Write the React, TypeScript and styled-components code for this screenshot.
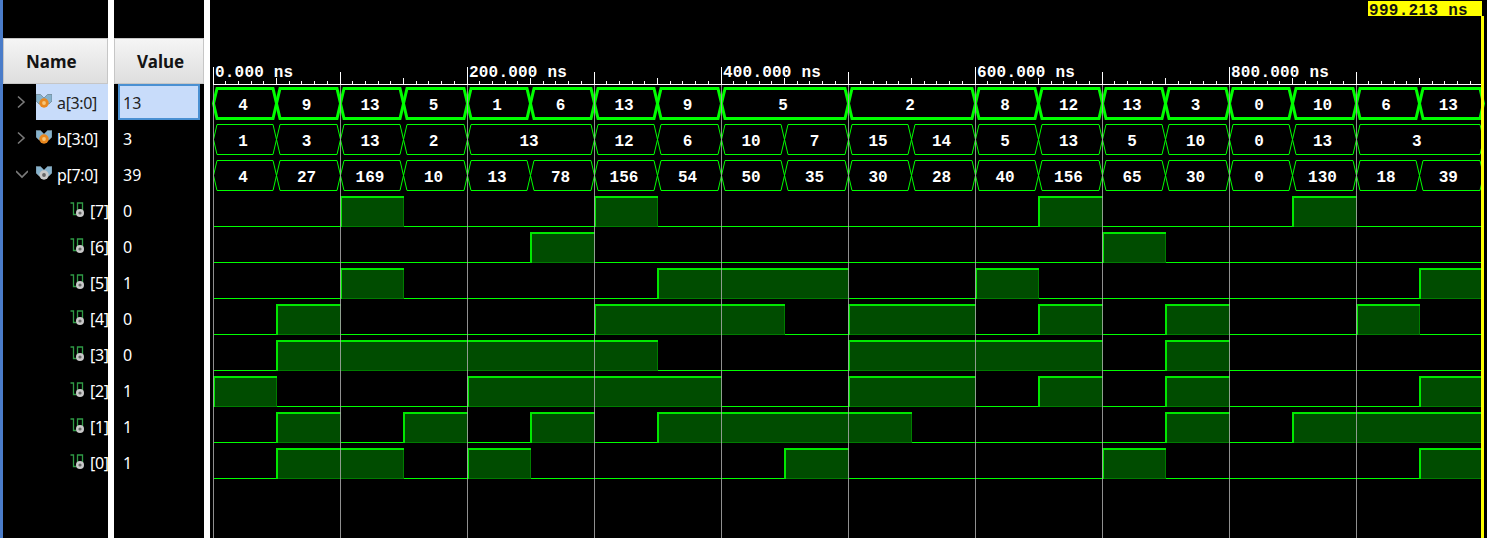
import React from "react";
import styled, { createGlobalStyle } from "styled-components";

const Global = createGlobalStyle`
  html, body { margin: 0; padding: 0; background: #fff; overflow: hidden; }
  #root { height: 538px; }
`;

const A: [string, number][] = [["4",1],["9",1],["13",1],["5",1],["1",1],["6",1],["13",1],["9",1],["5",2],["2",2],["8",1],["12",1],["13",1],["3",1],["0",1],["10",1],["6",1],["13",1]];
const B: [string, number][] = [["1",1],["3",1],["13",1],["2",1],["13",2],["12",1],["6",1],["10",1],["7",1],["15",1],["14",1],["5",1],["13",1],["5",1],["10",1],["0",1],["13",1],["3",2]];
const P = [4,27,169,10,13,78,156,54,50,35,30,28,40,156,65,30,0,130,18,39];
const BITS = [7,6,5,4,3,2,1,0];

const px = (i: number) => Math.floor(213 + 63.5 * i) + 0.5;
const END = 1481;

const Page = styled.div`
  display: flex;
  height: 538px;
  width: 1487px;
  background: #fff;
`;
const Strip = styled.div`
  width: 3px;
  background: #4a7cc9;
`;
const Column = styled.div<{ $w: number; $gap: number }>`
  width: ${(p) => p.$w}px;
  margin-right: ${(p) => p.$gap}px;
  background: #000;
  padding-top: 38px;
  box-sizing: border-box;
  overflow: hidden;
`;
const Header = styled.div<{ $pad: number }>`
  height: 46px;
  box-sizing: border-box;
  display: flex;
  align-items: center;
  padding-left: ${(p) => p.$pad}px;
  border: 1px solid #c6c6c6;
  background: linear-gradient(#f5f5f5, #dedede);
  color: #141414;
  font: bold 17px "Noto Sans", "Open Sans", sans-serif;
`;
const NameRow = styled.div<{ $indent: number }>`
  height: 36px;
  display: flex;
  align-items: center;
  padding-left: ${(p) => p.$indent}px;
  white-space: nowrap;
`;
const Chevron = styled.svg<{ $gap: number }>`
  width: 12px;
  height: 14px;
  margin-right: ${(p) => p.$gap}px;
  flex: none;
`;
const NameCell = styled.div<{ $selected?: boolean }>`
  flex: 1;
  height: 36px;
  display: flex;
  align-items: center;
  background: ${(p) => (p.$selected ? "#c8dcfa" : "transparent")};
`;
const BusGlyph = styled.svg`
  flex: none;
  margin-right: 5px;
  margin-top: -1px;
`;
const BitGlyph = styled.svg`
  flex: none;
  margin-right: 5px;
  margin-top: -2px;
`;
const Label = styled.span<{ $selected?: boolean }>`
  font: 16px "Noto Sans", "Open Sans", sans-serif;
  letter-spacing: -0.35px;
  color: ${(p) => (p.$selected ? "#222" : "#fff")};
  padding-top: 2px;
`;
const ValueRow = styled.div<{ $selected?: boolean }>`
  height: 36px;
  margin: 0 4px;
  box-sizing: border-box;
  display: flex;
  align-items: center;
  padding-left: ${(p) => (p.$selected ? 3 : 5)}px;
  padding-top: 2px;
  font: 16px "Noto Sans", "Open Sans", sans-serif;
  color: ${(p) => (p.$selected ? "#222" : "#fff")};
  background: ${(p) => (p.$selected ? "#c8dcfa" : "transparent")};
  border: ${(p) => (p.$selected ? "2px solid #4a90d2" : "0")};
`;
const WavePanel = styled.div`
  flex: 1;
  background: #000;
  height: 538px;
`;
const WaveSvg = styled.svg`
  display: block;
`;
const MonoText = styled.text<{ $fill: string; $spacing?: number }>`
  font: bold 16px "Liberation Mono", monospace;
  letter-spacing: ${(p) => p.$spacing ?? 0}px;
  fill: ${(p) => p.$fill};
`;

const Right = () => (
  <Chevron $gap={9} viewBox="0 0 12 14">
    <path d="M3 1.5 L9 7 L3 12.5" fill="none" stroke="#7a7a7a" strokeWidth="1.6" />
  </Chevron>
);
const Down = () => (
  <Chevron $gap={8} viewBox="0 0 12 14">
    <path d="M0 4 L6 10 L12 4" fill="none" stroke="#7a7a7a" strokeWidth="1.6" />
  </Chevron>
);

const BusIcon = ({ color, center }: { color: string; center: string }) => (
  <BusGlyph width="16" height="15" viewBox="0 0 16 15">
    <path d="M0 0.5 L4.5 0.5 L8 4 L11.5 0.5 L16 0.5 L16 7 L13 10 L3 10 L0 7 Z" fill="#86b2cc" stroke="#6a7f8c" strokeWidth="0.7" />
    <circle cx="8" cy="9" r="4.7" fill={color} />
    <circle cx="8" cy="9" r="1.9" fill={center} />
  </BusGlyph>
);

const BitIcon = () => (
  <BitGlyph width="15" height="15" viewBox="0 0 15 15">
    <path d="M0.5 1 H3.5 V12.5 H6.5 M7.5 9 V1 H12.5 V9" fill="none" stroke="#2f9a45" strokeWidth="1.3" />
    <circle cx="10" cy="11" r="4" fill="#c9c9c9" />
    <circle cx="10" cy="11" r="1.6" fill="#666" />
  </BitGlyph>
);

function hexPath(x0: number, x1: number, top: number, bottom: number) {
  const mid = (top + bottom) / 2;
  const k = 3.5;
  return `M${x0} ${mid} L${x0 + k} ${top} H${x1 - k} L${x1} ${mid} L${x1 - k} ${bottom} H${x0 + k} Z`;
}

const Bus = ({ segs, bottom, bold }: { segs: [string, number][]; bottom: number; bold?: boolean }) => {
  let i = 0;
  return (
    <g>
      {segs.map(([t, n], k) => {
        const x0 = px(i);
        const x1 = px(i + n);
        i += n;
        const cx = Math.min((x0 + x1) / 2, (x0 + 1481) / 2) - 2;
        return (
          <g key={k}>
            <path d={hexPath(x0, x1, bottom - 30, bottom)} fill="none" stroke="#00ff00" strokeWidth={bold ? 3 : 1} />
            <MonoText $fill="#fff" x={cx} y={bottom - 9} textAnchor="middle">{t}</MonoText>
          </g>
        );
      })}
    </g>
  );
};

const BitWave = ({ bit, bottom }: { bit: number; bottom: number }) => {
  const top = bottom - 30;
  const parts: React.ReactNode[] = [];
  let i = 0;
  while (i < 20) {
    const v = (P[i] >> bit) & 1;
    let j = i;
    while (j < 20 && ((P[j] >> bit) & 1) === v) j++;
    const x0 = px(i);
    const x1 = Math.min(px(j), END);
    if (v) {
      parts.push(
        <g key={i}>
          <rect x={x0} y={top} width={x1 - x0} height={30} fill="#004c00" stroke="#007c00" />
          <path d={`M${x0 + 0.5} ${bottom} V${top + 0.5} H${x1}`} fill="none" stroke="#00e800" strokeWidth="2" />
        </g>
      );
    } else {
      parts.push(<path key={i} d={`M${x0} ${bottom} H${x1}`} stroke="#00ff00" fill="none" />);
    }
    i = j;
  }
  return <g shapeRendering="crispEdges">{parts}</g>;
};

const Ruler = () => {
  const minor: React.ReactNode[] = [];
  for (let i = 0; i <= 100; i++) {
    const x = Math.floor(213 + 12.7 * i) + 0.5;
    if (x > 1481) break;
    if (i % 10 === 0) continue;
    minor.push(<path key={i} d={`M${x} ${i % 5 === 0 ? 78 : 81} V84`} stroke="#fff" />);
  }
  const grid: React.ReactNode[] = [];
  for (let i = 0; i <= 9; i++) {
    const x = px(i * 2);
    grid.push(<path key={i} d={`M${x} ${i % 2 === 0 ? 67 : 72} V84`} stroke="#fff" />);
  }
  return (
    <g shapeRendering="crispEdges">
      <path d="M213 84.5 H1481" stroke="#fff" />
      {minor}
      {grid}
    </g>
  );
};

const Grid = () => (
  <g shapeRendering="crispEdges">
    {Array.from({ length: 10 }, (_, i) => (
      <path key={i} d={`M${px(i * 2)} 85 V538`} stroke="#a8a8a8" strokeOpacity="0.85" />
    ))}
  </g>
);

export default function App() {
  return (
    <>
      <Global />
      <Page>
        <Strip />
        <Column $w={105} $gap={6}>
          <Header $pad={22}>Name</Header>
          <NameRow $indent={12}>
            <Right />
            <NameCell $selected>
              <BusIcon color="#e8871e" center="#f6c67a" />
              <Label $selected>a[3:0]</Label>
            </NameCell>
          </NameRow>
          <NameRow $indent={12}>
            <Right />
            <NameCell>
              <BusIcon color="#e8871e" center="#f6c67a" />
              <Label>b[3:0]</Label>
            </NameCell>
          </NameRow>
          <NameRow $indent={13}>
            <Down />
            <NameCell>
              <BusIcon color="#c9c9c9" center="#666" />
              <Label>p[7:0]</Label>
            </NameCell>
          </NameRow>
          {BITS.map((b) => (
            <NameRow key={b} $indent={67}>
              <BitIcon />
              <Label>[{b}]</Label>
            </NameRow>
          ))}
        </Column>
        <Column $w={90} $gap={6}>
          <Header $pad={22}>Value</Header>
          <ValueRow $selected>13</ValueRow>
          <ValueRow>3</ValueRow>
          <ValueRow>39</ValueRow>
          {BITS.map((b) => (
            <ValueRow key={b}>{(39 >> b) & 1}</ValueRow>
          ))}
        </Column>
        <WavePanel>
          <WaveSvg width="1277" height="538" viewBox="210 0 1277 538">
            <Ruler />
            {[0, 2, 4, 6, 8].map((h) => (
              <MonoText key={h} $fill="#fff" $spacing={0.2} x={px(h * 2) + 1.5} y={77}>
                {h === 0 ? "0.000 ns" : `${h}00.000 ns`}
              </MonoText>
            ))}
            <Bus segs={A} bottom={118.5} bold />
            <Bus segs={B} bottom={154.5} />
            <Bus segs={P.map((p) => [String(p), 1] as [string, number])} bottom={190.5} />
            {BITS.map((b, k) => (
              <BitWave key={b} bit={b} bottom={226.5 + 36 * k} />
            ))}
            <Grid />
            <rect x="1368" y="1" width="114" height="15" fill="#ffff00" />
            <MonoText $fill="#111" $spacing={0.3} x="1369" y="14.5">999.213 ns</MonoText>
            <rect x="1481" y="16" width="3" height="522" fill="#ffff00" />
          </WaveSvg>
        </WavePanel>
      </Page>
    </>
  );
}
